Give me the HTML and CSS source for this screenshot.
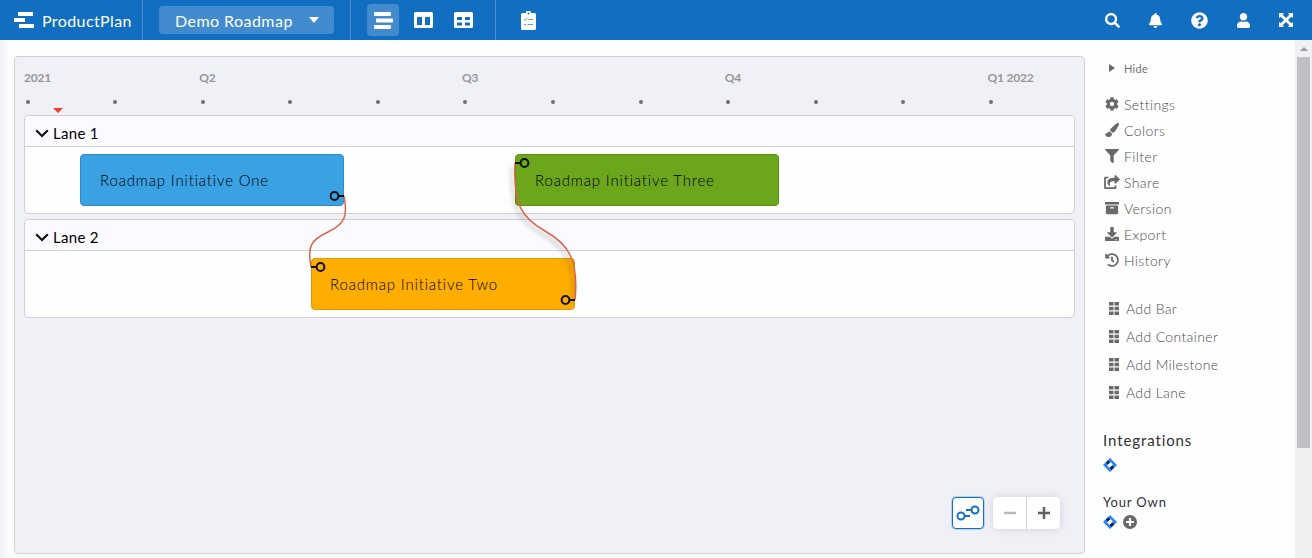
FILE: index.html
```
<!DOCTYPE html>
<html lang="en">
<head>
    <meta charset="UTF-8">
    <meta name="viewport" content="width=device-width, initial-scale=1.0">
    <title>Demo Roadmap - ProductPlan</title>
    <link rel="stylesheet" href="styles.css">
</head>
<body>
    <header class="topbar">
        <div class="brand">
            <svg width="20" height="16" viewBox="0 0 20 16"><path d="M4 0h15v4H4zM0 6h11v4H0zM5 12h15v4H5z"/></svg>
            <span>ProductPlan</span>
        </div>
        <div class="roadmap-picker">
            <button class="picker"><span>Demo Roadmap</span><i class="caret"></i></button>
        </div>
        <nav class="views">
            <a class="view active"><svg width="19" height="17" viewBox="0 0 19 17"><path d="M1 0h15q1 0 1 1v2q0 1-1 1H1q-1 0-1-1V1q0-1 1-1zM3 6.500h15q1 0 1 1v2q0 1-1 1H3q-1 0-1-1v-2q0-1 1-1zM1 13h15q1 0 1 1v2q0 1-1 1H1q-1 0-1-1v-2q0-1 1-1z"/></svg></a>
            <a class="view"><svg width="19" height="16" viewBox="0 0 19 16"><path fill-rule="evenodd" d="M1.500 0h16Q19 0 19 1.500v13q0 1.500-1.500 1.500h-16Q0 16 0 14.500v-13Q0 0 1.500 0zM3 5v8h5V5zM11 5v8h5V5z"/></svg></a>
            <a class="view"><svg width="19" height="16" viewBox="0 0 19 16"><path fill-rule="evenodd" d="M1.500 0h16Q19 0 19 1.500v13q0 1.500-1.500 1.500h-16Q0 16 0 14.500v-13Q0 0 1.500 0zM3 5v3h5V5zM11 5v3h5V5zM3 10.500v3h5v-3zM11 10.500v3h5v-3z"/></svg></a>
        </nav>
        <a class="view clipboard"><svg width="15" height="19" viewBox="0 0 15 19"><path d="M1.500 2H5a2.500 2.500 0 0 1 5 0h3.500Q15 2 15 3.500v14q0 1.500-1.500 1.500h-12Q0 19 0 17.500v-14Q0 2 1.500 2z"/><circle class="cut" cx="7.500" cy="2.500" r="1"/><path class="mark" d="M3 8l1.200 1.200L6.500 7M7.500 8.500H12M3 13.500h2M6.500 13.500H12"/></svg></a>
        <div class="tools">
            <svg viewBox="0 0 512 512" width="15" height="15"><path d="M505 442.700L405.300 343c-4.500-4.500-10.600-7-17-7H372c27.600-35.300 44-79.700 44-128C416 93.100 322.900 0 208 0S0 93.100 0 208s93.100 208 208 208c48.300 0 92.700-16.400 128-44v16.300c0 6.400 2.500 12.500 7 17l99.700 99.700c9.400 9.400 24.600 9.400 33.900 0l28.300-28.300c9.400-9.400 9.400-24.600.1-34zM208 336c-70.700 0-128-57.200-128-128 0-70.700 57.200-128 128-128 70.700 0 128 57.200 128 128 0 70.700-57.200 128-128 128z"/></svg>
            <svg viewBox="0 0 448 512" width="13" height="15"><path d="M224 512c35.300 0 64-28.700 64-64H160c0 35.300 28.700 64 64 64zm215-150c-19-21-55-52-55-154 0-78-54-140-128-155V32a32 32 0 1 0-64 0v21C118 68 64 130 64 208c0 102-36 133-55 154-6 6-9 14-9 22 0 16 13 32 32 32h384c19 0 32-16 32-32 0-8-3-16-9-22z"/></svg>
            <svg viewBox="0 0 512 512" width="17" height="17"><path d="M504 256c0 137-111 248-248 248S8 393 8 256C8 119.100 119 8 256 8s248 111.100 248 248zM262.700 90c-54.500 0-89.300 23-116.500 63.800-3.500 5.300-2.400 12.400 2.700 16.300l34.700 26.300c5.200 3.900 12.600 3 16.700-2.100 17.900-22.700 30.100-35.800 57.300-35.800 20.400 0 45.700 13.100 45.700 33 0 15-12.400 22.700-32.500 34C247.100 238.500 216 254.900 216 296v4c0 6.600 5.400 12 12 12h56c6.600 0 12-5.400 12-12v-1.300c0-28.500 83.200-29.600 83.200-106.700 0-58-60.200-102-116.500-102zM256 338c-25.400 0-46 20.600-46 46s20.600 46 46 46 46-20.600 46-46-20.600-46-46-46z"/></svg>
            <svg class="user" viewBox="0 0 448 512" width="13" height="15"><path d="M224 256c70.700 0 128-57.300 128-128S294.700 0 224 0 96 57.300 96 128s57.300 128 128 128zm89.600 32h-16.700c-22.200 10.200-46.900 16-72.900 16s-50.600-5.800-72.900-16h-16.700C60.200 288 0 348.200 0 422.400V464c0 26.500 21.500 48 48 48h352c26.500 0 48-21.500 48-48v-41.600c0-74.200-60.200-134.400-134.400-134.400z"/></svg>
            <svg viewBox="0 0 14 14" width="14" height="14"><path d="M0 0h5L3.700 1.700 7 5l3.300-3.300L9 0h5v5l-1.700-1.300L9 7l3.300 3.300L14 9v5H9l1.300-1.700L7 9l-3.300 3.300L5 14H0V9l1.700 1.300L5 7 1.700 3.700 0 5z"/></svg>
        </div>
    </header>

    <div class="page">
        <main class="board">
            <div class="quarters">
                <span>2021</span>
                <span>Q2</span>
                <span>Q3</span>
                <span>Q4</span>
                <span>Q1 2022</span>
            </div>
            <div class="months">
                <i></i><i></i><i></i><i></i><i></i><i></i><i></i><i></i><i></i><i></i><i></i><i></i>
                <b class="today"></b>
            </div>

            <section class="lane">
                <h2><svg width="14" height="9" viewBox="0 0 14 9"><path d="M1.200 1.200L7 7l5.800-5.800"/></svg>Lane 1</h2>
                <div class="lane-body">
                    <div class="bar blue"><span>Roadmap Initiative One</span></div>
                    <div class="bar green"><span>Roadmap Initiative Three</span></div>
                </div>
            </section>
            <section class="lane">
                <h2><svg width="14" height="9" viewBox="0 0 14 9"><path d="M1.200 1.200L7 7l5.800-5.800"/></svg>Lane 2</h2>
                <div class="lane-body">
                    <div class="bar orange"><span>Roadmap Initiative Two</span></div>
                </div>
            </section>

            <!-- dependencies between bars -->
            <svg class="links" width="1070" height="270" viewBox="15 57 1070 270">
                <g class="line">
                    <path d="M344 196C348 216 345 224 328 232C311 240 307 246 311 267"/>
                    <path class="shadowed" d="M515 163C513 205 522 218 545 231C568 244 579 259 575 300"/>
                </g>
                <g class="pin">
                    <circle cx="334.500" cy="196" r="3.900"/><path d="M338.500 196h5.500"/>
                    <circle cx="320.500" cy="267" r="3.900"/><path d="M316.500 267H311"/>
                    <circle cx="524.500" cy="163" r="3.900"/><path d="M520.500 163H515"/>
                    <circle cx="565.500" cy="300" r="3.900"/><path d="M569.500 300h5.500"/>
                </g>
            </svg>

            <div class="controls">
                <button class="toggle-links"><svg width="24" height="16" viewBox="0 0 24 16"><circle cx="5" cy="11" r="3.500"/><path d="M8.500 11H14M10 5h5.500"/><circle cx="19" cy="5" r="3.500"/></svg></button>
                <div class="zoom">
                    <button class="minus"><svg width="12" height="12" viewBox="0 0 12 12"><path d="M0 6h12"/></svg></button>
                    <button><svg width="12" height="12" viewBox="0 0 12 12"><path d="M0 6h12M6 0v12"/></svg></button>
                </div>
            </div>
        </main>

        <aside class="sidebar">
            <a class="hide"><i></i>Hide</a>
            <ul class="menu">
                <li><svg viewBox="0 0 512 512"><path d="M487.400 315.700l-42.600-24.600c4.300-23.200 4.300-47 0-70.200l42.600-24.600c4.900-2.800 7.100-8.600 5.500-14-11.100-35.600-30-67.800-54.700-94.600-3.800-4.100-10-5.100-14.800-2.300L380.800 110c-17.900-15.400-38.500-27.300-60.800-35.100V25.800c0-5.600-3.900-10.500-9.400-11.700-36.700-8.200-74.300-7.800-109.200 0-5.500 1.200-9.400 6.100-9.400 11.700V75c-22.200 7.900-42.800 19.800-60.800 35.100L88.700 85.500c-4.900-2.800-11-1.900-14.800 2.300-24.700 26.700-43.600 58.900-54.700 94.600-1.700 5.400.6 11.200 5.500 14L67.300 221c-4.300 23.200-4.300 47 0 70.200l-42.600 24.600c-4.900 2.800-7.100 8.600-5.500 14 11.100 35.600 30 67.800 54.700 94.600 3.800 4.100 10 5.100 14.800 2.300l42.600-24.600c17.900 15.400 38.500 27.300 60.800 35.100v49.200c0 5.600 3.900 10.500 9.400 11.700 36.700 8.200 74.300 7.800 109.200 0 5.500-1.200 9.400-6.100 9.400-11.700v-49.200c22.200-7.900 42.800-19.800 60.800-35.100l42.600 24.600c4.900 2.800 11 1.900 14.800-2.300 24.700-26.700 43.600-58.900 54.700-94.600 1.500-5.500-.7-11.300-5.600-14.100zM256 336c-44.100 0-80-35.900-80-80s35.900-80 80-80 80 35.900 80 80-35.900 80-80 80z"/></svg>Settings</li>
                <li><svg viewBox="0 0 512 512"><path d="M167 309.300c-56.700 0-83 43.100-98 67.200-17 31-64-3-69-1C0 452 47 512 134 512c85 0 120-50 120-118 0-4-1-7-1-10zM457 0c-15 0-29 7-40 17C213 200 192 213 192 265c0 13 3 26 8 38l64 47c8 1 15 2 23 2 60 0 93-44 209-260 8-15 16-31 16-47 0-27-27-45-55-45z"/></svg>Colors</li>
                <li><svg viewBox="0 0 512 512"><path d="M488 0H24C2.700 0-8 25.900 7.100 41L192 225.900V432c0 7.800 3.800 15.200 10.200 19.700l80 56C298 518.700 320 507.500 320 488V225.900L504.900 41C520 25.900 509.300 0 488 0z"/></svg>Filter</li>
                <li><svg class="wide" viewBox="0 0 576 512"><path d="M568.500 177.400L424.500 313c-15 14.200-40.500 4-40.500-17.400V224c-144 0-205 35-164 155 4.500 14.500-13 26-25.500 17C155 368 120 326 120 274c0-143.900 117.600-172.500 264-172.500V24c0-21.400 25.500-31.600 40.500-17.400l144 136c10 9.500 10 25.300 0 34.800zM384 379v69H64V128h50c20-24 44-40 71-52 9-4 6-12-2-12H48C21.500 64 0 85.500 0 112v352c0 26.500 21.500 48 48 48h352c26.500 0 48-21.500 48-48v-88c-24 7-42 7-64 3z"/></svg>Share</li>
                <li><svg viewBox="0 0 512 512"><path d="M32 448c0 17.700 14.300 32 32 32h384c17.700 0 32-14.300 32-32V160H32v288zm160-212c0-6.600 5.400-12 12-12h104c6.600 0 12 5.400 12 12v28c0 6.600-5.400 12-12 12H204c-6.600 0-12-5.400-12-12zM480 32H32C14.300 32 0 46.300 0 64v64h512V64c0-17.700-14.300-32-32-32z"/></svg>Version</li>
                <li><svg viewBox="0 0 512 512"><path d="M216 0h80c13.300 0 24 10.700 24 24v168h87.700c17.800 0 26.700 21.500 14.100 34.100L269.700 378.300c-7.500 7.500-19.800 7.500-27.300 0L90.100 226.100C77.500 213.500 86.400 192 104.200 192H192V24c0-13.300 10.700-24 24-24zm296 376v112c0 13.300-10.700 24-24 24H24c-13.300 0-24-10.700-24-24V376c0-13.300 10.700-24 24-24h146.700l49 49c20.100 20.100 52.500 20.100 72.600 0l49-49H488c13.300 0 24 10.700 24 24zm-124 88a20 20 0 1 0-40 0 20 20 0 0 0 40 0zm64 0a20 20 0 1 0-40 0 20 20 0 0 0 40 0z"/></svg>Export</li>
                <li><svg viewBox="0 0 512 512"><path d="M504 255.500C504.300 392 392.800 504 256.300 504c-59 0-113.200-20.500-155.800-54.900-11-8.900-11.900-25.500-1.800-35.600l11.300-11.300c8.600-8.600 22.400-9.600 31.900-2C173.100 425.100 212.800 440 256 440c101.700 0 184-82.300 184-184S357.700 72 256 72c-48.800 0-93.100 19-126.100 49.900l50.800 50.800c10.100 10.100 2.900 27.300-11.300 27.300H24c-8.800 0-16-7.200-16-16V38.600c0-14.300 17.200-21.400 27.300-11.300l49.400 49.400C129.200 34.100 189.600 8 256 8c136.800 0 247.700 110.800 248 247.500zm-180.900 78.800l9.800-12.600c8.100-10.500 6.300-25.500-4.200-33.700L288 256.300V152c0-13.300-10.700-24-24-24h-16c-13.300 0-24 10.700-24 24v135.700l65.400 50.900c10.500 8.100 25.500 6.300 33.700-4.300z"/></svg>History</li>
            </ul>
            <ul class="adders">
                <li><svg class="grip" viewBox="0 0 10 13"><path d="M0 0h4.500v3.500H0zM5.500 0H10v3.500H5.500zM0 4.700h4.500v3.500H0zM5.500 4.700H10v3.500H5.500zM0 9.400h4.500v3.500H0zM5.500 9.400H10v3.500H5.500z"/></svg>Add Bar</li>
                <li><svg class="grip" viewBox="0 0 10 13"><path d="M0 0h4.500v3.500H0zM5.500 0H10v3.500H5.500zM0 4.700h4.500v3.500H0zM5.500 4.700H10v3.500H5.500zM0 9.400h4.500v3.500H0zM5.500 9.400H10v3.500H5.500z"/></svg>Add Container</li>
                <li><svg class="grip" viewBox="0 0 10 13"><path d="M0 0h4.500v3.500H0zM5.500 0H10v3.500H5.500zM0 4.700h4.500v3.500H0zM5.500 4.700H10v3.500H5.500zM0 9.400h4.500v3.500H0zM5.500 9.400H10v3.500H5.500z"/></svg>Add Milestone</li>
                <li><svg class="grip" viewBox="0 0 10 13"><path d="M0 0h4.500v3.500H0zM5.500 0H10v3.500H5.500zM0 4.700h4.500v3.500H0zM5.500 4.700H10v3.500H5.500zM0 9.400h4.500v3.500H0zM5.500 9.400H10v3.500H5.500z"/></svg>Add Lane</li>
            </ul>
            <h3>Integrations</h3>
            <div class="apps">
                <svg class="jira" viewBox="0 0 14 14"><path class="b" d="M7 0l7 7-7 7-7-7z"/><path class="d" d="M3 4.500l2.500-2L7.500 5 5 7zM6.500 9.500L9 7l2 2.500L8.500 12z"/><path class="w" d="M7.500 4L10 6.500 6.500 10 4 7.500z"/></svg>
            </div>
            <h4>Your Own</h4>
            <div class="apps">
                <svg class="jira" viewBox="0 0 14 14"><path class="b" d="M7 0l7 7-7 7-7-7z"/><path class="d" d="M3 4.500l2.500-2L7.500 5 5 7zM6.500 9.500L9 7l2 2.500L8.500 12z"/><path class="w" d="M7.500 4L10 6.500 6.500 10 4 7.500z"/></svg>
                <svg class="plus" viewBox="0 0 14 14"><circle cx="7" cy="7" r="7"/><path d="M3 7h8M7 3v8"/></svg>
            </div>
        </aside>

        <div class="scrollbar"><i class="up"></i><div class="thumb"></div></div>
    </div>
</body>
</html>
```
FILE: styles.css
```
* {
    box-sizing: border-box;
}

body {
    margin: 0;
    height: 558px;
    overflow: hidden;
    font-family: Lato, 'Open Sans', sans-serif;
    background: #fefeff;
    color: #111;
}

svg {
    display: block;
    flex: none;
}

button {
    font: inherit;
    border: 0;
    padding: 0;
}

ul, h2, h3, h4 {
    margin: 0;
    padding: 0;
    list-style: none;
}

/* top bar */
.topbar {
    display: flex;
    height: 40px;
    background: #116ec1;
    color: #fff;
    fill: #fff;
}

.brand {
    display: flex;
    align-items: center;
    gap: 8px;
    width: 143px;
    padding-left: 14px;
    border-right: 1px solid #4b90d0;
    font-size: 16px;
    letter-spacing: 0.4px;
    white-space: nowrap;
}

.roadmap-picker {
    width: 208px;
    padding: 6px 16px;
    border-right: 1px solid #4b90d0;
}

.picker {
    display: flex;
    align-items: center;
    justify-content: space-between;
    width: 175px;
    height: 28px;
    padding: 0 15px 0 16px;
    border-radius: 4px;
    background: #418bce;
    color: #fff;
    font-size: 16px;
    letter-spacing: 0.45px;
    white-space: nowrap;
}

.caret {
    border: 5px solid transparent;
    border-top: 6px solid #fff;
    border-bottom: 0;
}

.views {
    display: flex;
    align-items: center;
    gap: 8px;
    width: 145px;
    padding-left: 16px;
    border-right: 1px solid #4b90d0;
}

.view {
    display: flex;
    align-items: center;
    justify-content: center;
    width: 32px;
    height: 32px;
    border-radius: 4px;
}

.view.active {
    background: #418bce;
}

.clipboard {
    margin: 4px 0 0 16px;
}

.clipboard .cut {
    fill: #116ec1;
}

.clipboard .mark {
    fill: none;
    stroke: #5d9bd4;
}

.tools {
    display: grid;
    grid-template-columns: repeat(5, 43.5px);
    place-items: center;
    margin-left: auto;
    margin-right: 4px;
}

.tools .user {
    margin-left: 2px;
}

/* roadmap */
.page {
    display: flex;
    height: 518px;
    padding-left: 14px;
    background: linear-gradient(to right, #f1f0f5, #fefeff 10px);
}

.board {
    position: relative;
    width: 1071px;
    height: 498px;
    margin-top: 16px;
    padding: 0 9px;
    background: #f0f1f7;
    border: 1px solid #d0d0d8;
    border-radius: 4px;
}

.quarters {
    display: grid;
    grid-template-columns: 2fr 3fr 3fr 3fr 1fr;
    height: 42px;
    line-height: 42px;
    font-size: 12px;
    font-weight: bold;
    letter-spacing: -0.2px;
    color: #96969b;
    white-space: nowrap;
}

.months {
    position: relative;
    display: grid;
    grid-template-columns: repeat(12, 1fr);
    height: 16px;
    padding-top: 1px;
}

.months i {
    width: 4px;
    height: 4px;
    margin-left: 1.500px;
    border-radius: 50%;
    background: #6d6d72;
}

.today {
    position: absolute;
    left: 29px;
    top: 9px;
    border: 5px solid transparent;
    border-top: 5px solid #f23c28;
    border-bottom: 0;
}

.lane {
    height: 99px;
    margin-bottom: 5px;
    background: #fefeff;
    border: 1px solid #d0d0d6;
    border-radius: 4px;
}

.lane h2 {
    display: flex;
    align-items: center;
    gap: 4px;
    height: 31px;
    padding: 4px 0 0 10px;
    border-bottom: 1px solid #d0d0d6;
    border-radius: 4px 4px 0 0;
    background: #fbfaff;
    font-size: 15px;
    font-weight: normal;
    letter-spacing: 0.3px;
    color: #000;
}

.lane h2 svg {
    fill: none;
    stroke: #111;
    stroke-width: 2.200;
}

.lane-body {
    display: flex;
    padding-top: 7px;
}

.bar {
    display: flex;
    align-items: center;
    width: 264px;
    height: 52px;
    padding-left: 19px;
    border: 1px solid;
    border-radius: 4px;
    font-size: 15px;
    font-weight: 300;
    letter-spacing: 0.83px;
    white-space: nowrap;
    color: #000;
}

.blue {
    margin-left: 55px;
    background: #3aa1e3;
    border-color: #2f8aca;
}

.green {
    margin-left: 171px;
    background: #6ca61b;
    border-color: #5a920f;
}

.orange {
    margin-left: 286px;
    padding-left: 18px;
    background: #ffae00;
    border-color: #de9a0c;
}

.links {
    position: absolute;
    left: 0;
    top: 0;
    fill: none;
}

.line {
    stroke: #dc6547;
    stroke-width: 1.500;
}

.shadowed {
    filter: drop-shadow(-3px 3px 2px rgba(0, 0, 0, 0.3));
}

.pin {
    stroke: #111;
    stroke-width: 2;
}

.controls {
    position: absolute;
    right: 24px;
    bottom: 24px;
    display: flex;
    gap: 9px;
}

.controls button {
    display: flex;
    align-items: center;
    justify-content: center;
    width: 33px;
    height: 32px;
    background: #fff;
}

.controls svg {
    fill: none;
    stroke: #606064;
    stroke-width: 2.500;
}

.controls .toggle-links {
    width: 32px;
    border: 1px solid #1270c6;
    border-radius: 4px;
    box-shadow: 0 0 0 1px #b6d2ee;
}

.controls .toggle-links svg {
    stroke: #1270c6;
    stroke-width: 2;
}

.zoom {
    display: flex;
    gap: 1px;
    border-radius: 4px;
    overflow: hidden;
    background: #d2d2d6;
    box-shadow: 0 0 8px rgba(0, 0, 0, 0.13);
}

.controls .minus svg {
    stroke: #b9b9bc;
}

/* sidebar */
.sidebar {
    width: 210px;
    padding: 20px 0 0 18px;
    color: #4c4c50;
    fill: #69696c;
    font-size: 14px;
    font-weight: 300;
}

.hide {
    display: flex;
    align-items: center;
    gap: 9px;
    height: 16px;
    padding-left: 6px;
    font-size: 11px;
    font-weight: normal;
    letter-spacing: 0.3px;
    color: #737376;
}

.hide i {
    border: 4px solid transparent;
    border-left: 6px solid #69696c;
    border-right: 0;
}

.menu {
    margin-top: 15px;
}

.menu li {
    display: flex;
    align-items: center;
    gap: 5px;
    height: 26px;
    padding-left: 2px;
    letter-spacing: 0.4px;
}

.menu svg {
    width: 14px;
    height: 14px;
}

.menu .wide {
    width: 16px;
    margin: 0 -1px;
}

.adders {
    margin-top: 21px;
}

.adders li {
    display: flex;
    align-items: center;
    gap: 7px;
    height: 28px;
    padding-left: 6px;
    letter-spacing: 0.35px;
}

.grip {
    width: 10px;
    height: 13px;
}

.sidebar h3,
.sidebar h4 {
    color: #303034;
    font-weight: normal;
}

.sidebar h3 {
    margin-top: 24px;
    line-height: 20px;
    font-size: 15px;
    letter-spacing: 0.9px;
}

.sidebar h4 {
    margin-top: 20px;
    line-height: 20px;
    font-size: 13px;
    letter-spacing: 0.85px;
}

.apps {
    display: flex;
    gap: 6px;
    margin-top: 8px;
}

h4 + .apps {
    margin-top: 3px;
}

.apps svg {
    width: 14px;
    height: 14px;
}

.jira .b {
    fill: #2583fb;
}

.jira .d {
    fill: #061b3b;
}

.jira .w {
    fill: #fff;
}

.plus path {
    stroke: #fff;
    stroke-width: 2.200;
}

.scrollbar {
    width: 17px;
    padding: 7px 2px 0;
    background: #f0eff2;
}

.up {
    display: block;
    width: 0;
    margin: 0 auto;
    border: 4px solid transparent;
    border-bottom: 4px solid #9c9b9f;
    border-top: 0;
}

.thumb {
    height: 391px;
    margin-top: 6px;
    background: #c1bfc3;
}
```
